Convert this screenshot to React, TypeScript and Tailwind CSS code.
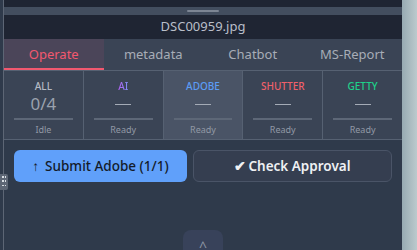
import React from "react";

const tabs = ["Operate", "metadata", "Chatbot", "MS-Report"];

type Cell = {
  label: string;
  labelClass: string;
  value: string;
  status: string;
  active?: boolean;
};

const cells: Cell[] = [
  { label: "ALL", labelClass: "text-[#b4bac4]", value: "0/4", status: "Idle" },
  {
    label: "AI",
    labelClass: "bg-gradient-to-r from-[#b15cf0] to-[#7c8cf8] bg-clip-text text-transparent",
    value: "—",
    status: "Ready",
  },
  { label: "ADOBE", labelClass: "text-[#5b9cf5]", value: "—", status: "Ready", active: true },
  { label: "SHUTTER", labelClass: "text-[#f0606a]", value: "—", status: "Ready" },
  { label: "GETTY", labelClass: "text-[#1ed18a]", value: "—", status: "Ready" },
];

function StatusCell({ cell, last }: { cell: Cell; last: boolean }) {
  return (
    <div
      className={`flex-1 flex flex-col items-center pt-[9px] ${last ? "" : "border-r border-[#566172]"} ${
        cell.active ? "bg-[#4a5466]" : ""
      }`}
    >
      <span className={`text-[10px] leading-[12px] font-medium ${cell.labelClass}`}>{cell.label}</span>
      {cell.value === "—" ? (
        <span className="h-[18px] mt-[3px] flex items-center">
          <span className="block w-[16px] h-px bg-[#a4abb6]" />
        </span>
      ) : (
        <span className="text-[17px] leading-[18px] mt-[3px] text-[#9aa1ad]">{cell.value}</span>
      )}
      <div className="self-stretch mx-[10px] mt-[5px] h-[2px] bg-[#5d6777]" />
      <span className="text-[9px] leading-[11px] mt-[4px] text-[#9299a5]">{cell.status}</span>
    </div>
  );
}

export default function App() {
  return (
    <div
      className="w-[417px] h-[250px] flex overflow-hidden bg-[#2f3a4b]"
      style={{ fontFamily: '"Noto Sans", "Open Sans", sans-serif' }}
    >
      {/* left edge */}
      <div className="relative w-[4px] shrink-0 bg-[#2f3a4b] border-r border-[#5d6675]">
        <div className="absolute left-0 top-[174px] w-[8px] h-[16px] rounded-r-[2px] bg-[#5d6675] grid grid-cols-2 gap-[1px] p-[2px] z-10">
          {Array.from({ length: 6 }).map((_, i) => (
            <span key={i} className="block w-[1.5px] h-[1.5px] bg-[#d8dde3]" />
          ))}
        </div>
      </div>

      {/* panel */}
      <div className="w-[398px] shrink-0 flex flex-col overflow-hidden">
        <div className="h-[7px] shrink-0 bg-[#1f2533]" />
        <div className="h-[8px] shrink-0 bg-[#434e5f] flex items-center justify-center">
          <span className="block w-[32px] h-[2px] rounded bg-[#7d8694]" />
        </div>
        <div className="h-[24px] shrink-0 bg-[#1f2533] flex items-center justify-center text-[13px] text-[#b9bfc9]">
          DSC00959.jpg
        </div>

        <div className="h-[31px] shrink-0 bg-[#3a4455] flex border-b border-[#566172] box-content">
          {tabs.map((t, i) => (
            <div
              key={t}
              className={`flex-1 flex items-center justify-center text-[13px] ${
                i === 0
                  ? "bg-[#4b4559] text-[#f2586f] border-b-2 border-[#f2586f] pt-[2px]"
                  : "text-[#a7adb7]"
              }`}
            >
              {t}
            </div>
          ))}
        </div>

        <div className="h-[69px] shrink-0 bg-[#3a4455] flex border-b border-[#566172]">
          {cells.map((c, i) => (
            <StatusCell key={c.label} cell={c} last={i === cells.length - 1} />
          ))}
        </div>

        <div className="flex shrink-0 gap-[6px] px-[10px] pt-[10px]">
          <button className="w-[173px] h-[32px] rounded-[6px] bg-[#60a0fa] text-[#141b29] text-[13.5px] font-medium flex items-center justify-center gap-[6px]">
            <span>↑</span>
            <span>Submit Adobe (1/1)</span>
          </button>
          <button className="flex-1 h-[32px] rounded-[6px] bg-[#353e50] border border-[#4a5467] text-[#eef0f3] text-[13.5px] font-semibold flex items-center justify-center gap-[2px]">
            <span>✔</span>
            <span>Check Approval</span>
          </button>
        </div>

        <div className="flex shrink-0 justify-center mt-[48px]">
          <div className="w-[40px] h-[40px] rounded-[8px] bg-[#38425a] flex justify-center pt-[6px] text-[14px] text-[#8c94a3]">
            ^
          </div>
        </div>
      </div>

      {/* right backdrop */}
      <div className="flex-1 bg-gradient-to-r from-[#97aab2] to-[#bccacd]" />
    </div>
  );
}
